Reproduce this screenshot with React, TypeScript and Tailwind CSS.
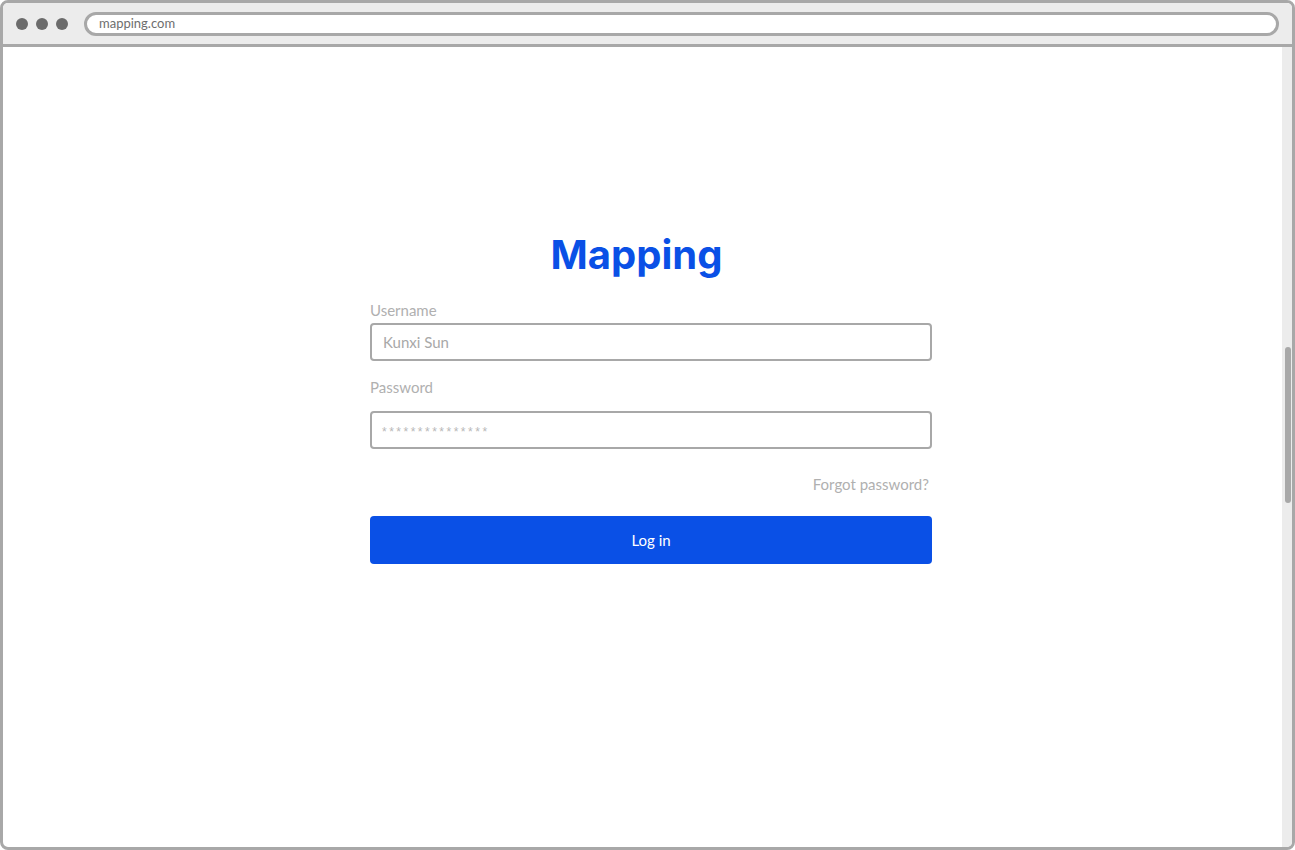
const App = () => {
  return (
    <div className="h-[850px] w-[1295px] bg-white font-['Lato',sans-serif]">
      <div className="flex h-full w-full flex-col overflow-hidden rounded-[8px] border-[3px] border-[#a8a8a8]">
        {/* browser bar */}
        <div className="flex h-[44px] shrink-0 items-center border-b-[3px] border-[#a8a8a8] bg-[#ececec] pl-[13px] pr-[13px]">
          <div className="flex gap-[8px]">
            <span className="h-[12px] w-[12px] rounded-full bg-[#6b6b6b]" />
            <span className="h-[12px] w-[12px] rounded-full bg-[#6b6b6b]" />
            <span className="h-[12px] w-[12px] rounded-full bg-[#6b6b6b]" />
          </div>
          <div className="ml-[16px] flex h-[24px] flex-1 items-center rounded-full border-[3px] border-[#a8a8a8] bg-white pl-[12px] text-[13px] text-[#6e6e6e]">
            mapping.com
          </div>
        </div>

        <div className="flex flex-1">
          <div className="flex-1">
            <div className="ml-[367px] w-[562px] pt-[183px]">
              <h1 className="mr-[29px] text-center font-['Inter',sans-serif] text-[40px] font-bold leading-[50px] text-[#0a50e6]">
                Mapping
              </h1>
              <div className="mt-[20px] text-[15px] leading-[20px] text-[#b0b0b0]">Username</div>
              <div className="mt-[3px] flex h-[38px] items-center rounded-[4px] border-2 border-[#a8a8a8] px-[11px] text-[15px] text-[#a8a8a8]">
                Kunxi Sun
              </div>
              <div className="mt-[16px] text-[15px] leading-[20px] text-[#b0b0b0]">Password</div>
              <div className="mt-[14px] flex h-[38px] items-center rounded-[4px] border-2 border-[#a8a8a8] px-[10px] font-['Liberation_Sans',sans-serif] text-[12px] tracking-[2.5px] text-[#b8b8b8]">
                <span className="mt-[3px]">***************</span>
              </div>
              <div className="mt-[25px] pr-[3px] text-right text-[15px] leading-[20px] text-[#b0b0b0]">
                Forgot password?
              </div>
              <button className="mt-[22px] flex h-[48px] w-full items-center justify-center rounded-[4px] bg-[#0a50e6] text-[15px] text-white">
                Log in
              </button>
            </div>
          </div>
          <div className="relative w-[10px] bg-[#ececec]">
            <div className="absolute left-[3px] top-[300px] h-[156px] w-[6px] rounded-full bg-[#a8a8a8]" />
          </div>
        </div>
      </div>
    </div>
  );
};

export default App;
